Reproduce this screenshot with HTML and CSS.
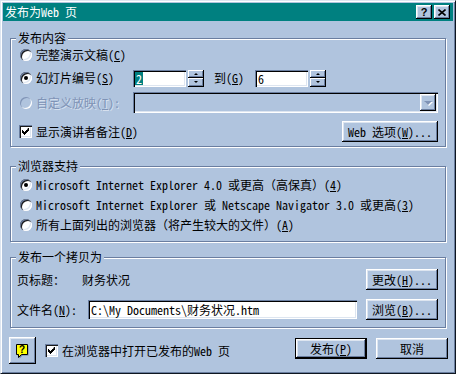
FILE: index.html
```html
<!DOCTYPE html>
<html lang="zh-CN">
<head>
    <meta charset="UTF-8">
    <title>发布为Web 页</title>
    <link rel="stylesheet" href="styles.css">
</head>
<body>
    <div class="window">
        <div class="titlebar">
            <span class="title">发布为Web 页</span>
            <div class="title-buttons">
                <button class="title-btn title-help">?</button>
                <button class="title-btn title-close">
                    <svg width="8" height="7" viewBox="0 0 8 7"><path d="M0.5 0.5L7.5 6.5M7.5 0.5L0.5 6.5" stroke="#000" stroke-width="1.6"/></svg>
                </button>
            </div>
        </div>

        <div class="group group-content">
            <span class="group-title">发布内容</span>
            <div class="row row-full">
                <label class="opt"><span class="radio"></span>完整演示文稿(<u>C</u>)</label>
            </div>
            <div class="row row-range">
                <label class="opt opt-fixed"><span class="radio checked"></span>幻灯片编号(<u>S</u>)</label>
                <div class="field num"><span class="sel">2</span></div>
                <div class="spin"><span class="spin-btn"><i class="up"></i></span><span class="spin-btn"><i class="down"></i></span></div>
                <span class="to">到(<u>G</u>)</span>
                <div class="field num">6</div>
                <div class="spin"><span class="spin-btn"><i class="up"></i></span><span class="spin-btn"><i class="down"></i></span></div>
            </div>
            <div class="row row-custom">
                <label class="opt opt-fixed disabled"><span class="radio"></span>自定义放映(<u>T</u>):</label>
                <div class="combo"><span class="combo-btn"><i class="combo-arrow"></i></span></div>
            </div>
            <div class="row row-notes">
                <label class="opt"><span class="check"><svg width="7" height="7" viewBox="0 0 7 7"><path d="M6 0h1v3h-1v1h-1v1h-1v1h-1v1h-1v-1h-1v-1h-1v-3h1v1h1v1h1v-1h1v-1h1z"/></svg></span>显示演讲者备注(<u>D</u>)</label>
                <button class="btn btn-web">Web 选项(<u>W</u>)...</button>
            </div>
        </div>

        <div class="group group-browser">
            <span class="group-title">浏览器支持</span>
            <div class="row">
                <label class="opt"><span class="radio checked"></span>Microsoft Internet Explorer 4.0 或更高（高保真）(<u>4</u>)</label>
            </div>
            <div class="row">
                <label class="opt"><span class="radio"></span>Microsoft Internet Explorer 或 Netscape Navigator 3.0 或更高(<u>3</u>)</label>
            </div>
            <div class="row">
                <label class="opt"><span class="radio"></span>所有上面列出的浏览器（将产生较大的文件）(<u>A</u>)</label>
            </div>
        </div>

        <div class="group group-copy">
            <span class="group-title">发布一个拷贝为</span>
            <div class="row">
                <span class="copy-label">页标题：</span>
                <span>财务状况</span>
                <button class="btn btn-side">更改(<u>H</u>)...</button>
            </div>
            <div class="row">
                <label class="copy-label copy-label-wide">文件名(<u>N</u>):</label>
                <div class="field path">C:\My Documents\财务状况.htm</div>
                <button class="btn btn-side">浏览(<u>B</u>)...</button>
            </div>
        </div>

        <div class="footer">
            <button class="btn btn-help">
                <svg width="16" height="17" viewBox="0 0 16 17">
                    <path d="M2.5 2.5h11v10h-6l-3 3v-3h-2z" fill="#6a7ea0"/>
                    <path d="M1.5 1.5h11v10h-6l-3 3v-3h-2z" fill="#ffff00" stroke="#000"/>
                    <text x="7" y="10" font-size="10" font-weight="bold" text-anchor="middle" font-family="Liberation Sans, sans-serif">?</text>
                </svg>
            </button>
            <label class="opt footer-check"><span class="check"><svg width="7" height="7" viewBox="0 0 7 7"><path d="M6 0h1v3h-1v1h-1v1h-1v1h-1v1h-1v-1h-1v-1h-1v-3h1v1h1v1h1v-1h1v-1h1z"/></svg></span>在浏览器中打开已发布的Web 页</label>
            <button class="btn btn-default">发布(<u>P</u>)</button>
            <button class="btn btn-cancel">取消</button>
        </div>
    </div>
</body>
</html>
```

FILE: styles.css
```css
* {
    box-sizing: border-box;
}
body {
    margin: 0;
    background-color: #b0c4de;
    color: #000;
    font-family: "Noto Sans Mono CJK SC", "Noto Sans CJK SC", "Liberation Mono", monospace;
    font-size: 12px;
    line-height: 14px;
}
u {
    text-underline-offset: 1px;
}
.window {
    width: 456px;
    height: 374px;
    padding: 2px;
    background-color: #b0c4de;
    border: 1px solid;
    border-color: #dde5f0 #0e1620 #0e1620 #dde5f0;
    box-shadow: inset 1px 1px #fff, inset -1px -1px #6a7ea0;
}
.titlebar {
    display: flex;
    align-items: center;
    height: 18px;
    padding: 0 3px 0 2px;
    background-color: #008080;
    color: #fff;
}
.title-buttons {
    display: flex;
    gap: 2px;
    margin-left: auto;
}
.title-btn {
    display: flex;
    align-items: center;
    justify-content: center;
    width: 16px;
    height: 14px;
    padding: 0;
    border: none;
    background-color: #b0c4de;
    box-shadow: inset -1px -1px #000, inset 1px 1px #fff, inset -2px -2px #6a7ea0, inset 2px 2px #dde5f0;
    font-family: "Liberation Sans", sans-serif;
    font-size: 11px;
    font-weight: bold;
    line-height: 12px;
    color: #000;
}
.title-close svg {
    margin-top: 1px;
}

/* group boxes */
.group {
    position: relative;
    margin: 0 7px;
    border: 1px solid #6a7ea0;
    box-shadow: inset 1px 1px #fff, 1px 1px #fff;
}
.group-title {
    position: absolute;
    top: -8px;
    left: 5px;
    padding: 0 2px;
    background-color: #b0c4de;
    line-height: 14px;
}
.group-content {
    margin-top: 17px;
    padding: 8px 7px 4px 9px;
}
.group-browser {
    margin-top: 19px;
    padding: 10px 7px 8px 9px;
}
.group-copy {
    margin-top: 15px;
    padding: 11px 7px 7px 6px;
}
.row {
    display: flex;
    align-items: center;
    height: 16px;
}
.group-browser .row + .row {
    margin-top: 4px;
}
.row-range {
    height: 18px;
    margin-top: 6px;
}
.row-custom {
    height: 21px;
    margin-top: 5px;
}
.row-notes {
    height: 21px;
    margin-top: 8px;
}
.group-copy .row {
    height: 21px;
}
.group-copy .row + .row {
    margin-top: 9px;
}

/* radios and checks */
.opt {
    display: flex;
    align-items: center;
    white-space: nowrap;
}
.opt-fixed {
    width: 113px;
    flex-shrink: 0;
}
.radio {
    position: relative;
    width: 12px;
    height: 12px;
    margin-right: 4px;
    border-radius: 50%;
    background-color: #fff;
    box-shadow: inset 1px 1px #6a7ea0, inset 2px 2px #1a1a1a, inset -1px -1px #fff, inset -2px -2px #dde5f0;
}
.radio.checked::after {
    content: "";
    position: absolute;
    left: 4px;
    top: 4px;
    width: 4px;
    height: 4px;
    border-radius: 50%;
    background-color: #000;
}
.disabled {
    color: #7f93b6;
    text-shadow: 1px 1px 0 #d6e0ee;
}
.disabled .radio {
    background-color: #b0c4de;
    box-shadow: inset 1px 1px #7f93b6, inset -1px -1px #fff;
}
.check {
    display: flex;
    align-items: center;
    justify-content: center;
    width: 13px;
    height: 13px;
    margin: 0 4px 0 -1px;
    background-color: #fff;
    box-shadow: inset 1px 1px #6a7ea0, inset 2px 2px #1a1a1a, inset -1px -1px #fff, inset -2px -2px #dde5f0;
}

/* text fields */
.field {
    height: 17px;
    background-color: #fff;
    box-shadow: inset 1px 1px #6a7ea0, inset 2px 2px #000, inset -1px -1px #fff, inset -2px -2px #dde5f0;
    line-height: 17px;
    white-space: nowrap;
}
.num {
    width: 53px;
    padding-left: 3px;
}
.num .sel {
    display: inline-block;
    padding: 0 1px;
    margin-left: -1px;
    line-height: 13px;
    background-color: #008080;
    color: #fff;
}
.spin {
    display: flex;
    flex-direction: column;
    width: 16px;
    height: 17px;
    margin-left: 2px;
}
.spin-btn {
    display: flex;
    align-items: center;
    justify-content: center;
    flex: 1;
    background-color: #b0c4de;
    box-shadow: inset -1px -1px #000, inset 1px 1px #fff, inset -2px -2px #6a7ea0;
}
.spin-btn i {
    width: 0;
    height: 0;
    border-left: 2px solid transparent;
    border-right: 2px solid transparent;
}
.spin-btn .up {
    border-bottom: 2px solid #000;
}
.spin-btn .down {
    border-top: 2px solid #000;
}
.to {
    margin: 0 11px 0 10px;
}
.combo {
    display: flex;
    justify-content: flex-end;
    width: 305px;
    height: 21px;
    padding: 2px;
    background-color: #b0c4de;
    box-shadow: inset 1px 1px #6a7ea0, inset 2px 2px #000, inset -1px -1px #fff, inset -2px -2px #dde5f0;
}
.combo-btn {
    display: flex;
    align-items: center;
    justify-content: center;
    width: 16px;
    height: 17px;
    background-color: #b0c4de;
    box-shadow: inset -1px -1px #000, inset 1px 1px #fff, inset -2px -2px #6a7ea0, inset 2px 2px #dde5f0;
}
.combo-arrow {
    width: 0;
    height: 0;
    border-left: 4px solid transparent;
    border-right: 4px solid transparent;
    border-top: 4px solid #7f93b6;
    filter: drop-shadow(1px 1px 0 #fff);
}
.path {
    width: 269px;
    height: 19px;
    padding-left: 3px;
    line-height: 19px;
}
.copy-label {
    width: 65px;
    flex-shrink: 0;
}
.copy-label-wide {
    width: 71px;
}

/* push buttons */
.btn {
    height: 21px;
    padding: 0;
    border: none;
    background-color: #b0c4de;
    box-shadow: inset -1px -1px #000, inset 1px 1px #fff, inset -2px -2px #6a7ea0, inset 2px 2px #dde5f0;
    font-family: inherit;
    font-size: 12px;
    color: #000;
    white-space: nowrap;
}
.btn-web {
    width: 96px;
    margin-left: auto;
}
.btn-side {
    width: 72px;
    margin-left: auto;
}
.footer {
    display: flex;
    align-items: flex-start;
    height: 27px;
    margin-top: 9px;
    padding: 0 5px 0 6px;
}
.btn-help {
    display: flex;
    align-items: center;
    justify-content: center;
    width: 27px;
    height: 27px;
    padding: 1px 0 0 1px;
}
.footer-check {
    height: 27px;
    margin-left: 10px;
}
.btn-default {
    width: 72px;
    margin: 1px 0 0 auto;
    border: 1px solid #000;
}
.btn-cancel {
    width: 72px;
    margin: 1px 0 0 9px;
}
```
